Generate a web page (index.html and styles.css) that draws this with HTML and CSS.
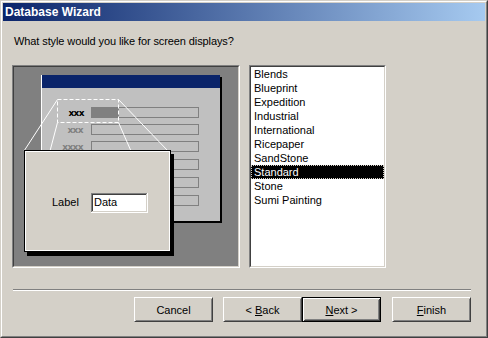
FILE: index.html
```html
<!DOCTYPE html>
<html>
<head>
<meta charset="utf-8">
<title>Database Wizard</title>
<link rel="stylesheet" href="styles.css">
</head>
<body>
<div class="window">
  <div class="frame">
    <div class="titlebar">Database Wizard</div>
    <div class="prompt">What style would you like for screen displays?</div>
    <div class="main">
      <div class="sunken preview">
        <div class="sunken-inner preview-inner">
          <svg class="illus" width="224" height="199" viewBox="0 0 224 199">
            <rect x="29" y="10" width="179" height="146" fill="#000"/>
            <rect x="27" y="8" width="179" height="146" fill="#c0c0c0"/>
            <rect x="27" y="8" width="1" height="146" fill="#fff"/>
            <rect x="28" y="8" width="178" height="13" fill="#0a246a"/>
            <rect x="77" y="40" width="28" height="11" fill="#808080"/>
            <g fill="none" stroke="#808080" stroke-width="1">
              <rect x="77.5" y="40.5" width="107" height="10"/>
              <rect x="77.5" y="57.5" width="107" height="10"/>
              <rect x="77.5" y="74.5" width="107" height="10"/>
              <rect x="77.5" y="92.5" width="107" height="10"/>
              <rect x="77.5" y="110.5" width="107" height="10"/>
              <rect x="77.5" y="128.5" width="107" height="10"/>
            </g>
            <g class="xlab" text-anchor="end">
              <text x="70" y="49" fill="#000">xxx</text>
              <text x="69" y="66" fill="#808080">xxx</text>
              <text x="69" y="83" fill="#808080">xxxx</text>
            </g>
            <rect x="43.5" y="32.5" width="61" height="23" fill="none" stroke="#fff" stroke-dasharray="4 2"/>
            <g stroke="#fff" stroke-width="1" fill="none">
              <line x1="43.5" y1="32.5" x2="10" y2="84"/>
              <line x1="43.5" y1="55.5" x2="36" y2="84"/>
              <line x1="104.5" y1="32.5" x2="154" y2="84"/>
              <line x1="104.5" y1="55.5" x2="117" y2="84"/>
            </g>
            <rect x="13" y="87" width="147" height="102" fill="#000"/>
            <rect x="10" y="83" width="147" height="102" fill="#000"/>
            <rect x="11" y="84" width="145" height="100" fill="#fff"/>
            <rect x="12" y="85" width="143" height="98" fill="#d4d0c8"/>
            <text class="plab" x="38" y="139">Label</text>
            <rect x="77" y="126" width="57" height="20" fill="#fff"/>
            <rect x="77" y="126" width="56" height="1" fill="#808080"/>
            <rect x="77" y="126" width="1" height="19" fill="#808080"/>
            <rect x="78" y="127" width="54" height="1" fill="#404040"/>
            <rect x="78" y="127" width="1" height="17" fill="#404040"/>
            <rect x="77" y="145" width="57" height="1" fill="#fff"/>
            <rect x="133" y="126" width="1" height="20" fill="#fff"/>
            <rect x="78" y="144" width="55" height="1" fill="#d4d0c8"/>
            <rect x="132" y="127" width="1" height="18" fill="#d4d0c8"/>
            <text class="plab" x="80" y="139">Data</text>
          </svg>
        </div>
      </div>
      <div class="sunken list">
        <div class="sunken-inner list-inner">
          <div class="item">Blends</div>
          <div class="item">Blueprint</div>
          <div class="item">Expedition</div>
          <div class="item">Industrial</div>
          <div class="item">International</div>
          <div class="item">Ricepaper</div>
          <div class="item">SandStone</div>
          <div class="item selected">Standard</div>
          <div class="item">Stone</div>
          <div class="item">Sumi Painting</div>
        </div>
      </div>
    </div>
    <div class="separator"></div>
    <div class="buttons">
      <div class="btn cancel"><span>Cancel</span></div>
      <div class="btn"><span>&lt; <u>B</u>ack</span></div>
      <div class="btn default"><span><u>N</u>ext &gt;</span></div>
      <div class="btn finish"><span><u>F</u>inish</span></div>
    </div>
  </div>
</div>
</body>
</html>
```

FILE: styles.css
```css
html, body {
  margin: 0;
  padding: 0;
  background: #d4d0c8;
}
body {
  font-family: "Liberation Sans", Arial, sans-serif;
  font-size: 11px;
  color: #000;
}
.window {
  width: 488px;
  height: 338px;
  box-sizing: border-box;
  border: 1px solid;
  border-color: #d4d0c8 #404040 #404040 #d4d0c8;
  background: #d4d0c8;
}
.frame {
  height: 100%;
  box-sizing: border-box;
  border: 1px solid;
  border-color: #fff #808080 #808080 #fff;
  padding: 1px;
  display: flex;
  flex-direction: column;
}
.titlebar {
  height: 18px;
  line-height: 18px;
  padding-left: 2px;
  background: linear-gradient(to right, #0a246a, #a6caf0);
  color: #fff;
  font-weight: bold;
  font-size: 12px;
  font-family: "Liberation Sans", Arial, sans-serif;
}
.prompt {
  margin: 14px 0 0 11px;
  line-height: 13px;
  letter-spacing: -0.1px;
}
.main {
  display: flex;
  gap: 9px;
  margin-top: 17px;
  padding-left: 9px;
}
.sunken {
  box-sizing: border-box;
  height: 203px;
  border: 1px solid;
  border-color: #808080 #fff #fff #808080;
}
.sunken-inner {
  box-sizing: border-box;
  height: 100%;
  border: 1px solid;
  border-color: #404040 #d4d0c8 #d4d0c8 #404040;
}
.preview {
  width: 228px;
}
.preview-inner {
  background: #808080;
}
.illus {
  display: block;
}
.xlab {
  font-family: "DejaVu Sans", sans-serif;
  font-size: 9px;
  font-weight: bold;
  letter-spacing: -0.6px;
}
.plab {
  font-family: "Liberation Sans", Arial, sans-serif;
  font-size: 11px;
}
.list {
  width: 137px;
}
.list-inner {
  background: #fff;
}
.item {
  height: 14px;
  line-height: 14px;
  padding-left: 3px;
  white-space: nowrap;
}
.item.selected {
  background: #000;
  color: #fff;
  outline: 1px dotted #d4d0c8;
  outline-offset: -1px;
}
.separator {
  margin: 21px 0 0 10px;
  width: 458px;
  border-top: 1px solid #808080;
  border-bottom: 1px solid #fff;
}
.buttons {
  display: flex;
  margin-top: 6px;
  padding-left: 131px;
}
.btn {
  box-sizing: border-box;
  width: 79px;
  height: 25px;
  display: flex;
  align-items: center;
  justify-content: center;
  border: 1px solid;
  border-color: #fff #404040 #404040 #fff;
  box-shadow: inset 1px 1px #d4d0c8, inset -1px -1px #808080;
  white-space: pre;
}
.btn.cancel {
  margin-right: 10px;
}
.btn.finish {
  margin-left: 11px;
}
.btn.default {
  border: 1px solid #000;
  box-shadow: inset 1px 1px #fff, inset -1px -1px #404040, inset 2px 2px #d4d0c8, inset -2px -2px #808080;
}
.btn u {
  text-decoration: underline;
  text-underline-offset: 1px;
}
```
